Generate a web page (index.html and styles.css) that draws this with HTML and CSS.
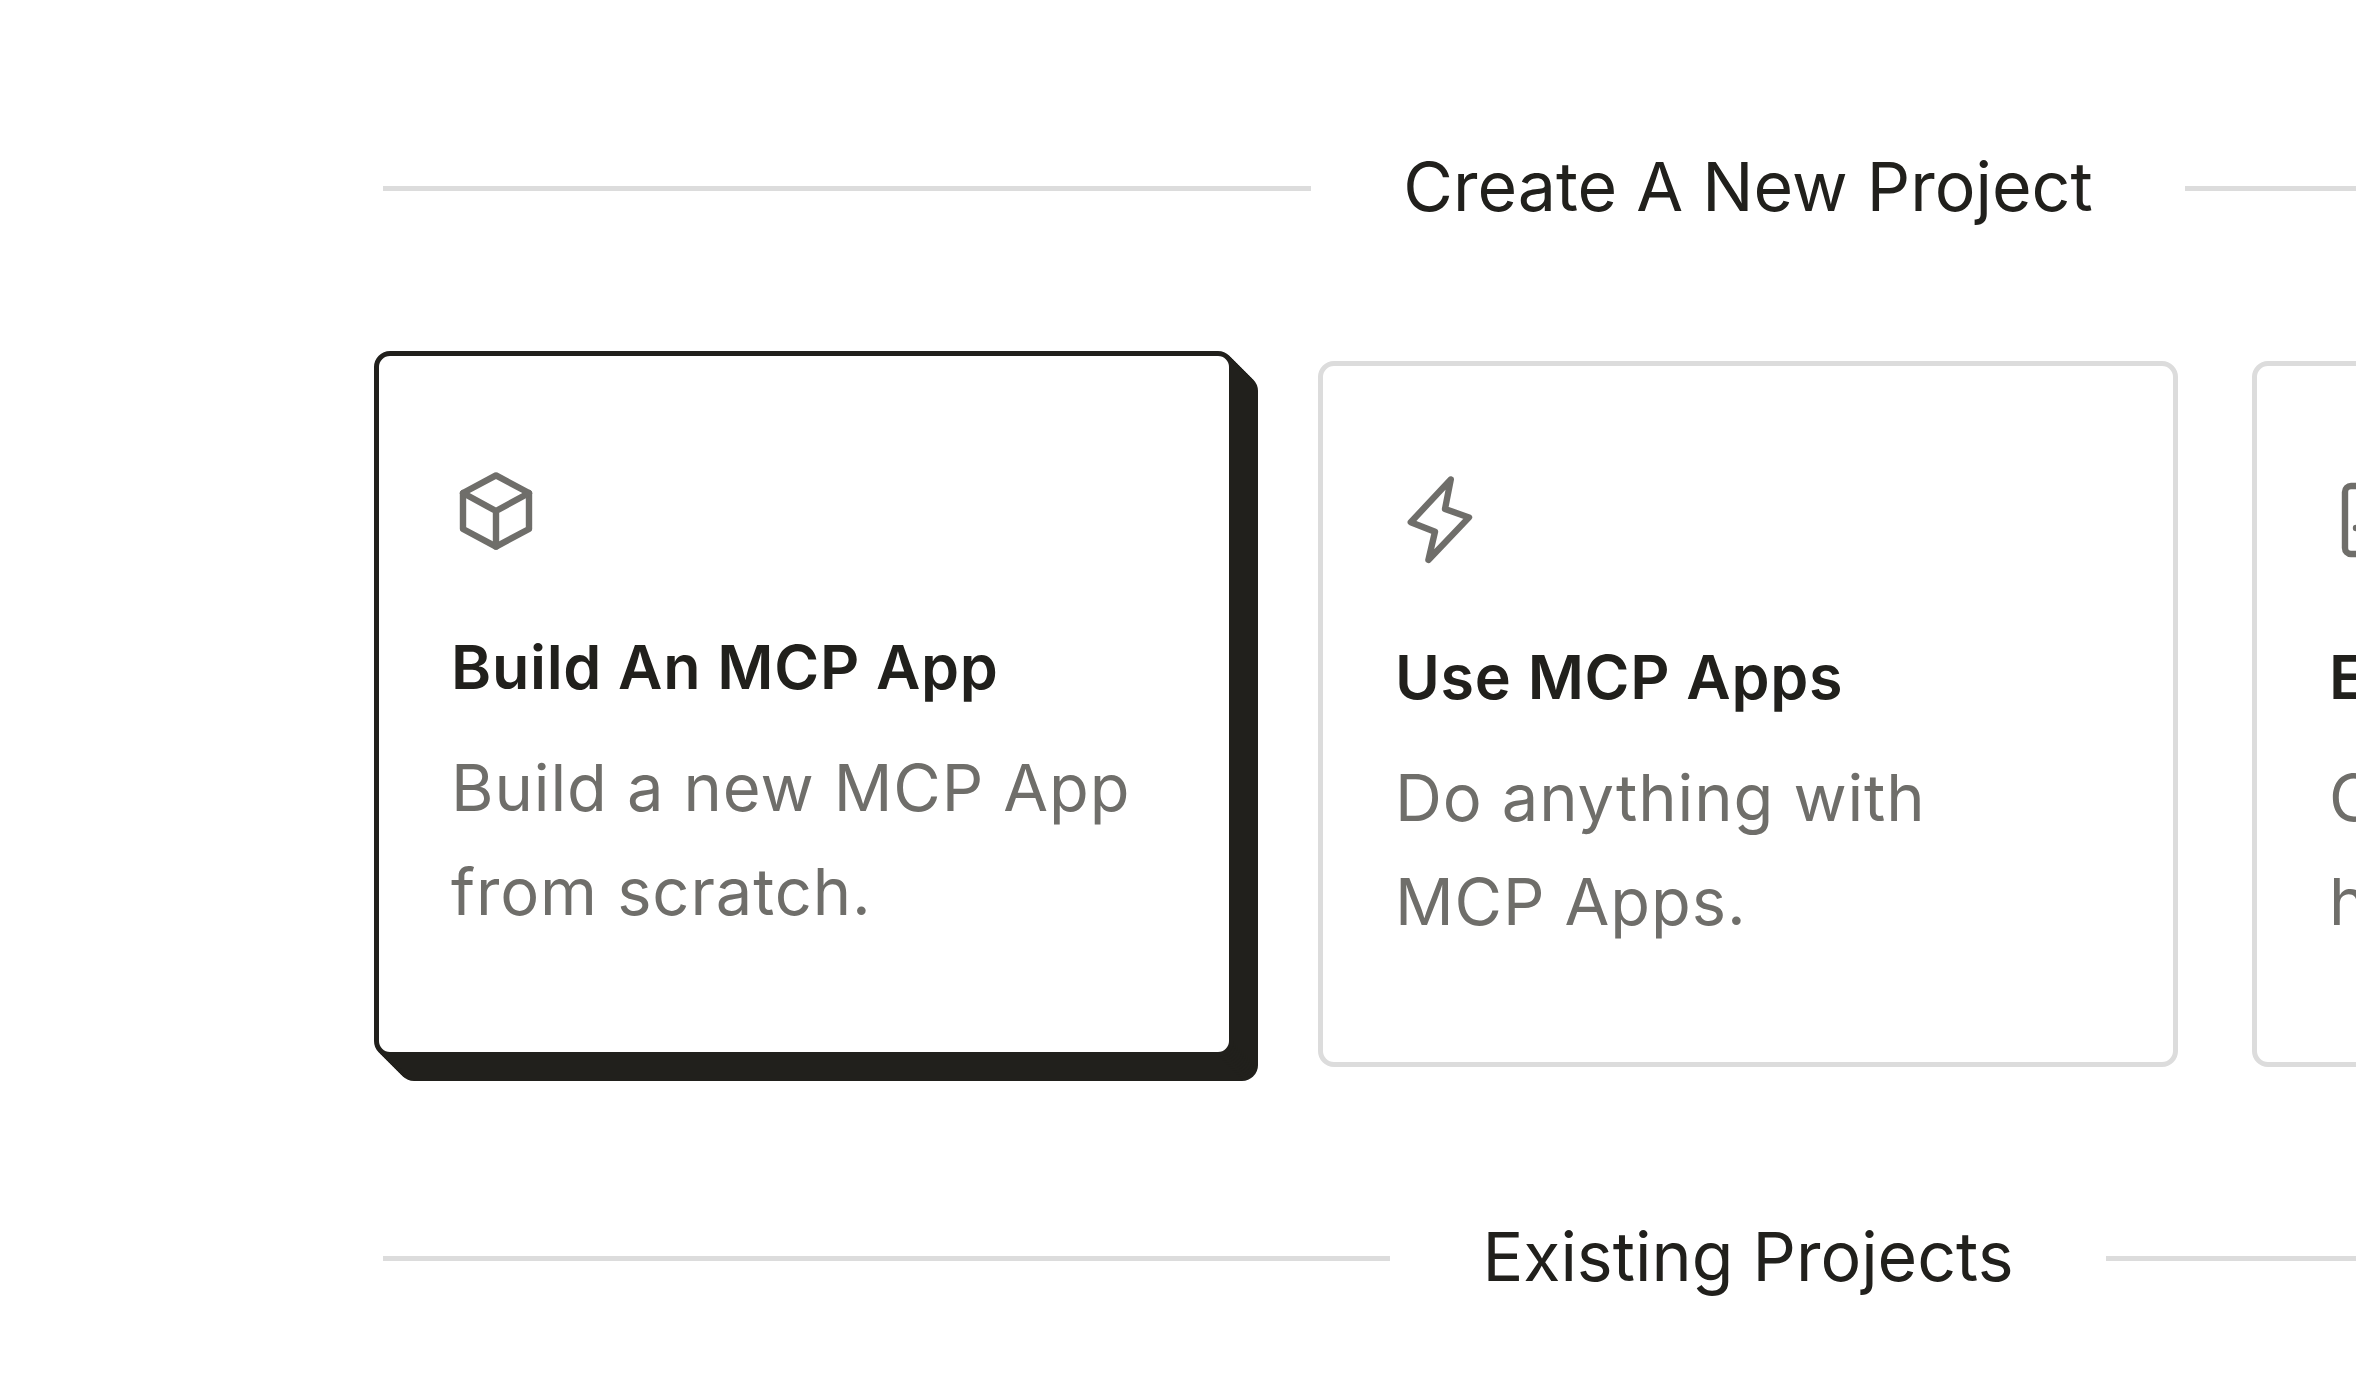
FILE: index.html
```html
<!DOCTYPE html>
<html lang="en">
<head>
<meta charset="utf-8">
<title>Projects</title>
<link rel="stylesheet" href="styles.css">
</head>
<body>
<main class="page">
  <div class="divider"><h2 class="divider-title">Create A New Project</h2></div>
  <section class="cards">
    <article class="card card-active">
      <svg class="icon" viewBox="0 0 24 24" width="96" height="96" fill="none" stroke="#6f6e6a" stroke-width="1.6" stroke-linejoin="round" stroke-linecap="round">
        <path d="M12 3.100 20.250 7.500v9L12 20.900 3.750 16.500v-9Z"/><path d="M3.750 7.500 12 12l8.250-4.500M12 12v8.900"/>
      </svg>
      <h3 class="card-title">Build An MCP App</h3>
      <p class="card-desc">Build a new MCP App from scratch.</p>
    </article>
    <article class="card">
      <svg class="icon" viewBox="0 0 24 24" width="96" height="96" fill="none" stroke="#6f6e6a" stroke-width="1.6" stroke-linejoin="round" stroke-linecap="round">
        <path d="M14.700 1.600 4.700 12.300l6.050 2.400-1.650 7.050L19.250 11.100 13.250 9z"/>
      </svg>
      <h3 class="card-title">Use MCP Apps</h3>
      <p class="card-desc">Do anything with MCP Apps.</p>
    </article>
    <article class="card">
      <svg class="icon" viewBox="0 0 24 24" width="96" height="96" fill="none" stroke="#6f6e6a" stroke-width="1.6" stroke-linejoin="round" stroke-linecap="round">
        <rect x="4.750" y="3.250" width="14.500" height="17" rx="1.500"/><path d="M7.500 13.750h9"/>
      </svg>
      <h3 class="card-title">Explore Templates</h3>
      <p class="card-desc">Choose a template to help you start.</p>
    </article>
  </section>
  <div class="divider divider-lower"><h2 class="divider-title">Existing Projects</h2></div>
</main>
</body>
</html>
```
FILE: styles.css
```css
* { box-sizing: border-box; }
html, body { margin: 0; height: 100%; overflow: hidden; background: #fff; }
body { font-family: "Inter", "Liberation Sans", sans-serif; color: #21201c; }
.page { width: 2730px; margin-left: 383px; padding-top: 136px; }
.divider { display: flex; align-items: center; gap: 92px; height: 104px; }
.divider::before, .divider::after { content: ""; flex: 1; height: 5px; background: #dcdcdc; }
.divider-lower { margin-top: 139px; }
.divider-title { margin: 0 0 4px; font-size: 68px; font-weight: 400; line-height: 104px; white-space: nowrap; }
.cards { display: grid; grid-template-columns: repeat(3, 860px); gap: 74px; margin: 121px 0 0 1px; }
.card { height: 706px; padding: 107px 72px 0; border: 5px solid #dcdcdc; border-radius: 16px; background: #fff; }
.card-active {
  border-color: #21201c;
  transform: translate(-10px, -10px);
  box-shadow: 2px 2px 0 #21201c, 4px 4px 0 #21201c, 6px 6px 0 #21201c, 8px 8px 0 #21201c, 10px 10px 0 #21201c, 12px 12px 0 #21201c, 14px 14px 0 #21201c, 16px 16px 0 #21201c, 18px 18px 0 #21201c, 20px 20px 0 #21201c, 22px 22px 0 #21201c, 24px 24px 0 #21201c;
}
.icon { display: block; margin-left: -3px; }
.card-title { margin: 56px 0 0; font-size: 61px; font-weight: 600; letter-spacing: 0.7px; line-height: 104px; }
.card-desc { margin: 17px 0 0; max-width: 685px; font-size: 65px; font-weight: 400; letter-spacing: 0.9px; line-height: 104px; color: #6f6e6a; }
```
